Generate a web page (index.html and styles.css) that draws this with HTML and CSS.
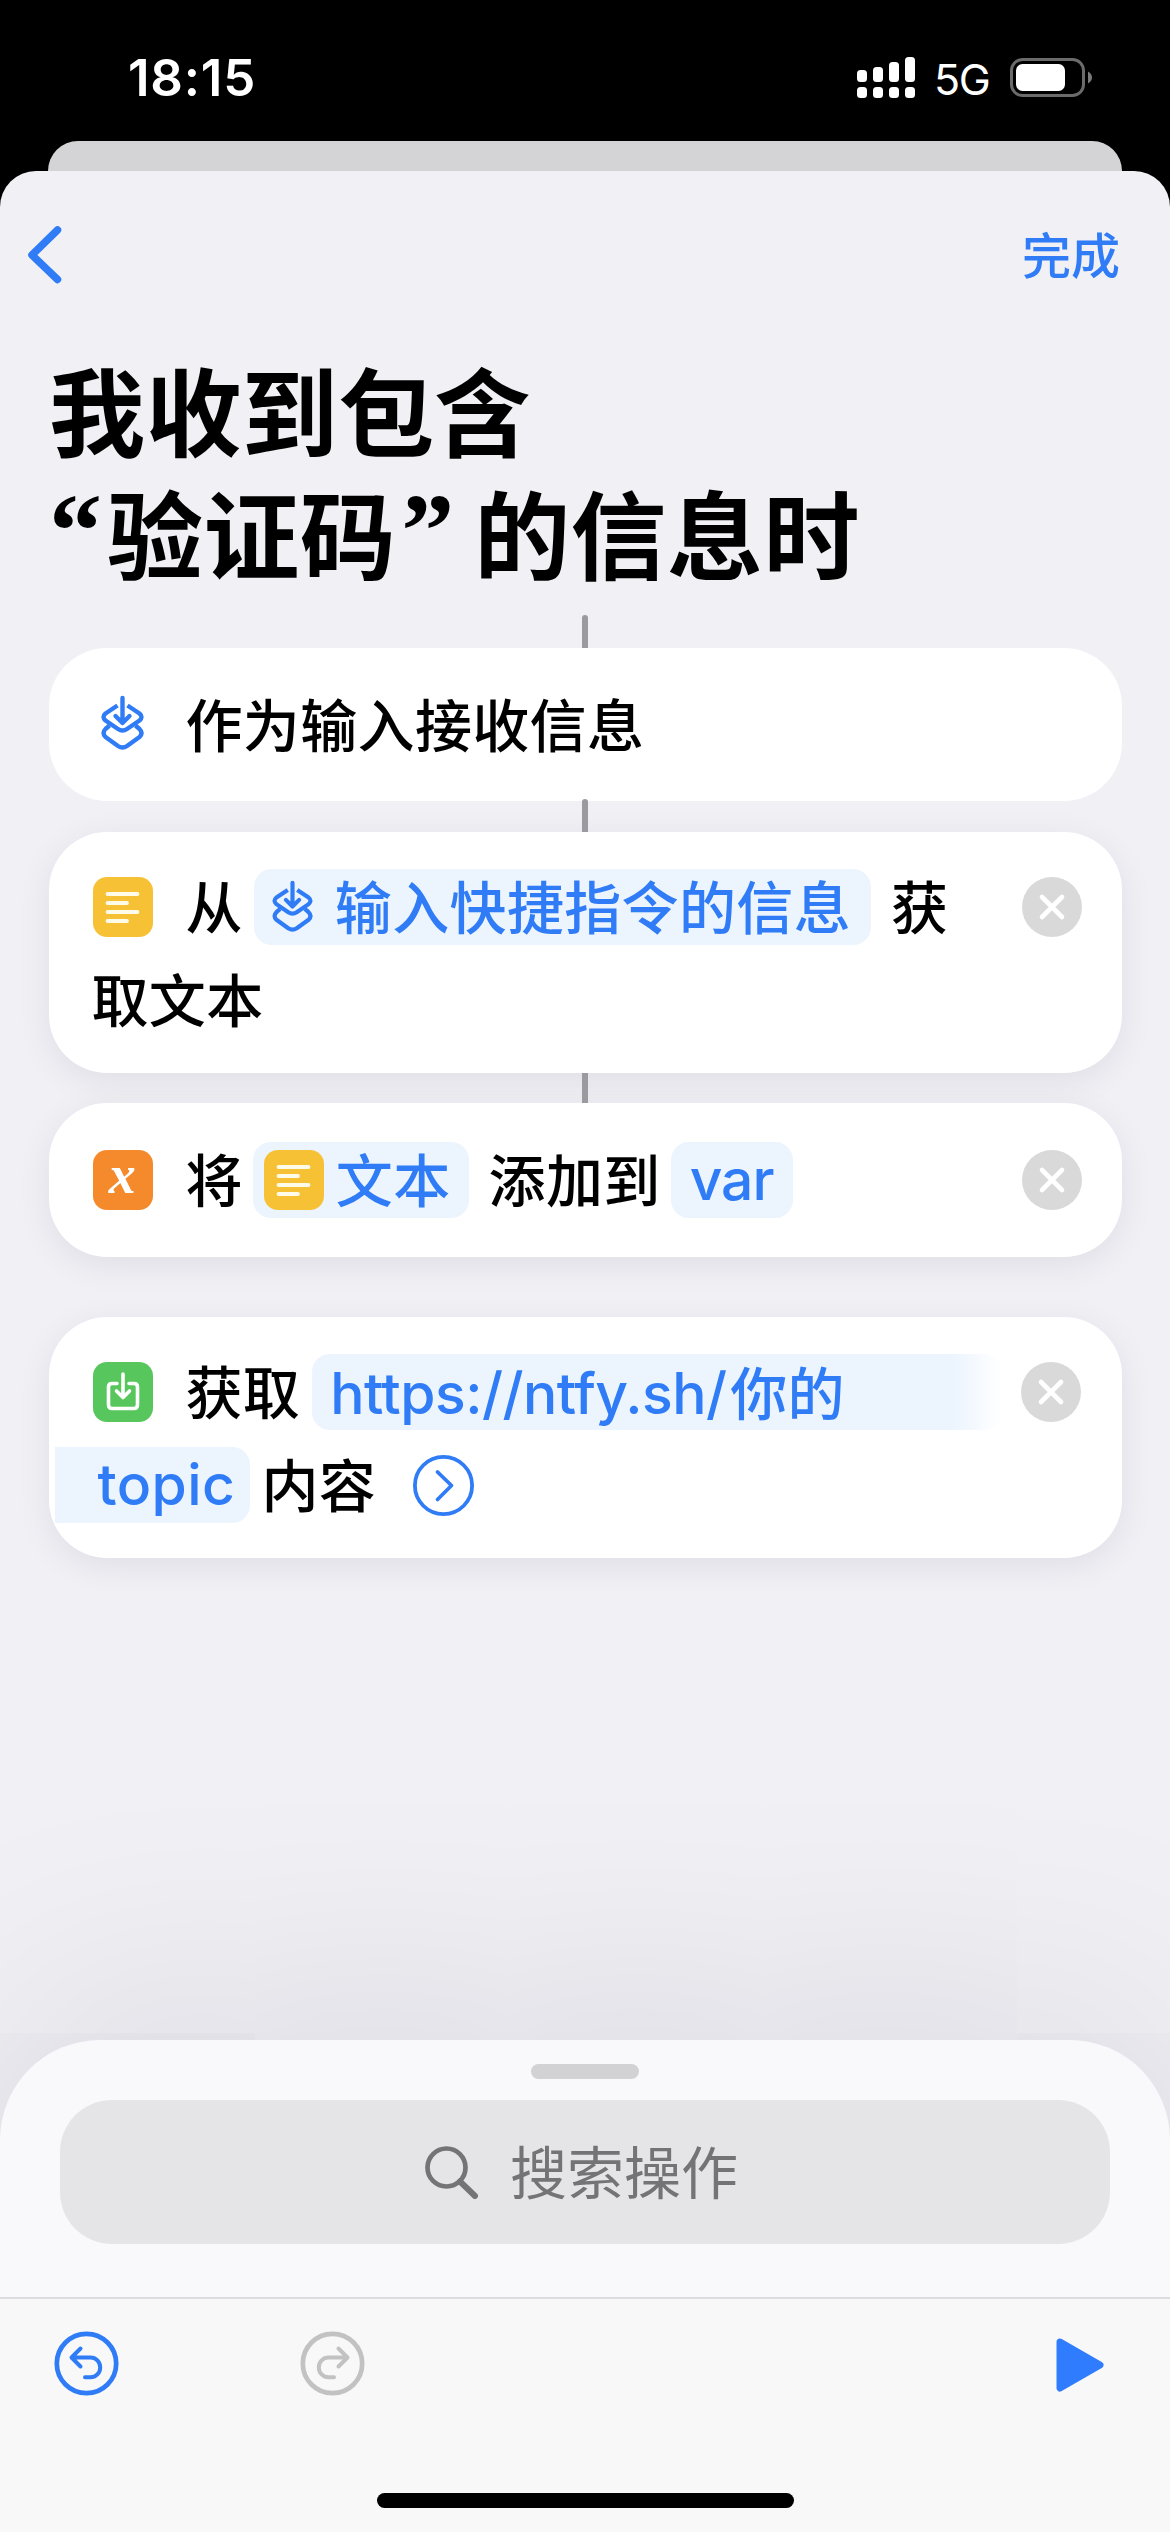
FILE: index.html
```html
<!DOCTYPE html>
<html lang="zh-CN">
<head>
<meta charset="utf-8">
<title>快捷指令</title>
<link rel="stylesheet" href="styles.css">
</head>
<body>
<svg width="0" height="0" class="defs">
  <symbol id="receive" viewBox="0 0 45 56">
    <g fill="none" stroke="currentColor" stroke-width="4.4" stroke-linecap="round" stroke-linejoin="round">
      <path d="M22.500 3V27.500M15.500 21L22.500 28L29.500 21"/>
      <path stroke-linecap="butt" d="M17.500 10.500L5.500 18.500Q1.500 22 5.500 25.500L18 34Q22.500 37 27 34L39.500 25.500Q43.500 22 39.500 18.500L27.500 10.500"/>
      <path stroke-linecap="butt" d="M9.500 30.500L5.500 34Q1.500 38 5.500 42L18 51Q22.500 54 27 51L39.500 42Q43.500 38 39.500 34L35.500 30.500"/>
    </g>
  </symbol>
  <symbol id="text" viewBox="0 0 60 60">
    <path d="M14.500 17H44.500M14.500 26H34M14.500 35H44.500M14.500 44H34" fill="none" stroke="#fffbe9" stroke-width="3.800" stroke-linecap="round"/>
  </symbol>
  <symbol id="close" viewBox="0 0 60 60">
    <circle cx="30" cy="30" r="30" fill="#d9d9d9"/>
    <path d="M20 20L40 40M40 20L20 40" stroke="#fff" stroke-width="4.600" stroke-linecap="round"/>
  </symbol>
</svg>

<header class="status">
  <span class="time">18:15</span>
  <svg class="signal" width="58" height="42" viewBox="0 0 58 42" fill="#fff">
    <rect x="0" y="13" width="10" height="12" rx="3.500"/><rect x="16" y="10" width="10" height="15" rx="3.500"/><rect x="32" y="5" width="10" height="20" rx="3.500"/><rect x="48" y="0" width="10" height="25" rx="3.500"/>
    <rect x="0" y="30" width="10" height="11" rx="3.500"/><rect x="16" y="30" width="10" height="11" rx="3.500"/><rect x="32" y="30" width="10" height="11" rx="3.500"/><rect x="48" y="30" width="10" height="11" rx="3.500"/>
  </svg>
  <span class="network">5G</span>
  <svg class="battery" width="83" height="39" viewBox="0 0 83 39">
    <rect x="1.500" y="1.500" width="72" height="36" rx="11" fill="none" stroke="#6b6b6b" stroke-width="3"/>
    <rect x="6" y="6" width="49" height="27" rx="6.500" fill="#fff"/>
    <path d="M78 13.500Q82 16 82 19.500T78 25.500Z" fill="#7b7b7b"/>
  </svg>
</header>
<div class="back-sheet"></div>

<div class="sheet">
  <nav class="nav">
    <svg width="40" height="60" viewBox="0 0 40 60"><path d="M33.500 5L8 30L33.500 54.500" fill="none" stroke="#2f7cf6" stroke-width="7.500" stroke-linecap="round" stroke-linejoin="round"/></svg>
    <a class="done">完成</a>
  </nav>
  <h1 class="title">我收到包含<br><span class="quote open">“</span>验证码<span class="quote shut">”</span>的信息时</h1>

  <main class="flow">
    <i class="link"></i>
    <section class="card single">
      <div class="line">
        <svg class="receive-lead"><use href="#receive"/></svg>
        <span class="word first">作为输入接收信息</span>
      </div>
    </section>
    <i class="link over"></i>
    <section class="card raised">
      <div class="line">
        <span class="tile yellow"><svg><use href="#text"/></svg></span>
        <span class="word first">从</span>
        <span class="pill input"><svg class="receive-small"><use href="#receive"/></svg><span class="word">输入快捷指令的信息</span></span>
        <span class="word after">获</span>
        <svg class="close"><use href="#close"/></svg>
      </div>
      <div class="line"><span class="word">取文本</span></div>
    </section>
    <i class="link short"></i>
    <section class="card raised single">
      <div class="line">
        <span class="tile orange">x</span>
        <span class="word first">将</span>
        <span class="pill result"><span class="tile yellow"><svg><use href="#text"/></svg></span><span class="word">文本</span></span>
        <span class="word after">添加到</span>
        <span class="pill variable latin">var</span>
        <svg class="close"><use href="#close"/></svg>
      </div>
    </section>
    <section class="card raised apart">
      <div class="line">
        <span class="tile green"><svg viewBox="0 0 60 60"><g fill="none" stroke="#fff" stroke-width="3.600" stroke-linecap="round" stroke-linejoin="round"><path d="M30 12V34M23.500 29L30 35.500L36.500 29"/><path d="M24 21.500H19Q15.500 21.500 15.500 25V42.500Q15.500 46.500 19 46.500H41Q44.500 46.500 44.500 42.500V25Q44.500 21.500 41 21.500H36"/></g></svg></span>
        <span class="word first">获取</span>
        <span class="pill url"><span class="latin address">https://ntfy.sh/</span><span class="word">你的</span></span>
        <svg class="close"><use href="#close"/></svg>
      </div>
      <div class="line">
        <span class="pill topic latin">topic</span>
        <span class="word content">内容</span>
        <svg class="more" viewBox="0 0 61 61" fill="none" stroke="#2f7cf6"><circle cx="30.500" cy="30.500" r="28.600" stroke-width="3.800"/><path d="M24.500 17L38.500 30.500L24.500 44.500" stroke-width="3.800" stroke-linecap="round" stroke-linejoin="round"/></svg>
      </div>
    </section>
  </main>

  <div class="panel">
    <i class="grabber"></i>
    <div class="search">
      <svg width="54" height="54" viewBox="0 0 54 54" fill="none" stroke="#747476"><circle cx="22.500" cy="22.500" r="19" stroke-width="4.700"/><path d="M36 36.500L51 51" stroke-width="6" stroke-linecap="round"/></svg>
      <span>搜索操作</span>
    </div>
  </div>
  <footer class="toolbar">
    <svg class="undo" viewBox="0 0 65 65" fill="none" stroke="#2f7cf6" stroke-linecap="round" stroke-linejoin="round"><circle cx="32.500" cy="32.500" r="29.700" stroke-width="4.700"/><path d="M26.500 17.500L17.500 26.500L26.500 35.500M18 26.500H36.500A9.700 9.900 0 0 1 36.500 46.300H31" stroke-width="4"/></svg>
    <svg class="redo" viewBox="0 0 65 65" fill="none" stroke="#c2c2c2" stroke-linecap="round" stroke-linejoin="round"><circle cx="32.500" cy="32.500" r="29.700" stroke-width="4.700"/><path d="M38.500 17.500L47.500 26.500L38.500 35.500M47 26.500H28.500A9.700 9.900 0 0 0 28.500 46.300H34" stroke-width="4"/></svg>
    <svg class="play" width="48" height="54" viewBox="0 0 48 54"><path d="M4 4L44 27L4 50Z" fill="#2f7cff" stroke="#2f7cff" stroke-width="7" stroke-linejoin="round"/></svg>
    <i class="home"></i>
  </footer>
</div>
</body>
</html>
```
FILE: styles.css
```css
* { box-sizing: border-box; }
body {
  margin: 0;
  width: 1170px;
  height: 2532px;
  display: flex;
  flex-direction: column;
  overflow: hidden;
  background: #000;
  color: #000;
  font-family: Inter, "Noto Sans CJK SC", sans-serif;
}
svg { flex: none; display: block; }
.defs { position: absolute; }

.status {
  height: 141px;
  padding: 0 77px 0 128px;
  display: flex;
  align-items: center;
  color: #fff;
}
.time {
  margin: 15px auto 0 0;
  font-size: 51px;
  line-height: 60px;
  font-weight: 600;
  letter-spacing: .8px;
}
.signal { margin-top: 14px; }
.network {
  margin: 17px 0 0 19px;
  width: 56px;
  font-size: 43px;
  line-height: 50px;
  letter-spacing: -1.5px;
}
.battery { margin: 14px 0 0 20px; }

.back-sheet {
  height: 30px;
  margin: 0 48px;
  border-radius: 32px 32px 0 0;
  background: #d4d4d6;
}
.sheet {
  flex: 1;
  display: flex;
  flex-direction: column;
  overflow: hidden;
  border-radius: 36px 36px 0 0;
  background: #f1f0f5;
}
.nav {
  height: 168px;
  padding: 0 50px 0 24px;
  display: flex;
  align-items: center;
  justify-content: space-between;
}
.done {
  margin-bottom: 5px;
  font-family: "Noto Sans CJK SC", sans-serif;
  font-size: 49px;
  line-height: 60px;
  font-weight: 500;
  color: #2f7cf6;
}
.title {
  height: 246px;
  margin: 7px 0 23px 49px;
  font: 700 96px/123px "Noto Sans CJK SC", sans-serif;
  letter-spacing: .4px;
  white-space: nowrap;
}
.quote {
  display: inline-block;
  font-family: "Liberation Serif", serif;
  font-size: 106px;
  line-height: 0;
  letter-spacing: 0;
  vertical-align: 5px;
}
.open { width: 58px; }
.shut { width: 78px; padding-left: 5px; }

.flow {
  flex: 1;
  display: flex;
  flex-direction: column;
  padding: 0 48.5px;
}
.link {
  position: relative;
  align-self: center;
  width: 6px;
  height: 33px;
  border-radius: 3px 3px 0 0;
  background: #9b9b9f;
}
.over { margin-top: -2px; z-index: 1; }
.short { height: 30px; border-radius: 0; }

.card {
  height: 241px;
  padding: 28px 40px 25px 44px;
  border-radius: 58px;
  background: #fff;
}
.single { height: 154px; padding-top: 30px; }
.raised { box-shadow: 0 8px 34px rgba(20, 20, 50, .075); }
.apart { margin-top: 60px; }
.card.single:not(.raised) { height: 153px; }

.line {
  display: flex;
  align-items: center;
  height: 94px;
  font: 500 57px/76px "Noto Sans CJK SC", sans-serif;
  letter-spacing: .35px;
  white-space: nowrap;
}
.line + .line { height: 92px; margin-left: -1px; }
.word { margin-bottom: 7px; }
.first { margin-left: 33px; }
.after { margin-left: 20px; }
.receive-lead { width: 45px; height: 56px; margin: 0 8px 4px 7px; color: #2f7cf6; }
.receive-small { width: 43px; height: 53px; margin: 0 21px 2px 0; }

.tile {
  flex: none;
  width: 60px;
  height: 60px;
  border-radius: 14px;
  color: #fff;
}
.tile svg { width: 60px; height: 60px; }
.yellow { background: #f7c135; }
.orange {
  background: #f58a2d;
  font: italic 700 54px/50px "Liberation Serif", serif;
  text-align: center;
}
.green { background: #57c75d; }

.pill {
  display: flex;
  align-items: center;
  height: 76px;
  border-radius: 18px;
  background: #ecf4fe;
  color: #2f7cf6;
}
.latin { font-family: Inter, sans-serif; }
.input { margin-left: 11px; padding: 0 20px 0 17px; }
.result { margin-left: 10px; padding: 0 18px 0 11px; }
.result .tile { margin-right: 12px; }
.variable { margin-left: 10px; width: 122px; justify-content: center; letter-spacing: -1px; }
.url {
  margin-left: 12px;
  width: 690px;
  padding-left: 18px;
  background: linear-gradient(90deg, #ecf4fe 640px, #fff);
}
.url .word { margin-bottom: 5px; }
.address { width: 400px; margin-top: 3px; letter-spacing: -.5px; }
.topic {
  margin-left: -37px;
  width: 195px;
  padding-left: 43px;
  border-radius: 0 18px 18px 0;
  letter-spacing: .4px;
}
.content { margin-left: 12px; }
.more { width: 61px; height: 61px; margin-left: 37px; }
.close { width: 60px; height: 60px; margin-left: auto; }
.url + .close { margin-left: 19px; }

.panel {
  height: 257px;
  padding: 24px 60px 0;
  display: flex;
  flex-direction: column;
  border-radius: 100px 100px 0 0;
  background: #f9f9fc;
  box-shadow: 0 0 300px rgba(10, 10, 25, .15);
}
.grabber {
  align-self: center;
  width: 108px;
  height: 15px;
  border-radius: 8px;
  background: #d2d2d4;
}
.search {
  height: 144px;
  margin-top: 21px;
  display: flex;
  align-items: center;
  justify-content: center;
  border-radius: 52px;
  background: #e5e5e7;
  color: #747476;
  font: 400 57px/76px "Noto Sans CJK SC", sans-serif;
}
.search span { margin: 0 8px 7px 32px; }

.toolbar {
  position: relative;
  height: 235px;
  padding: 32px 66px 0 54px;
  display: flex;
  align-items: flex-start;
  border-top: 2px solid #dcdce0;
  background: #f8f8f9;
}
.undo, .redo { width: 65px; height: 65px; }
.redo { margin-left: 181px; }
.play { margin: 7px 0 0 auto; }
.home {
  position: absolute;
  left: 377px;
  bottom: 24px;
  width: 417px;
  height: 15px;
  border-radius: 8px;
  background: #000;
}
```
